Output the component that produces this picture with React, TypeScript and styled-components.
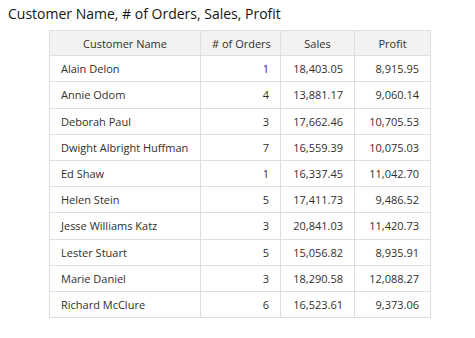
import * as React from 'react';
import styled, { createGlobalStyle } from 'styled-components';

const GlobalStyle = createGlobalStyle`
    body {
        margin: 0;
        background: #fff;
        font-family: "Open Sans", "Noto Sans", sans-serif;
        color: #161513;
    }
`;

const Page = styled.div`
    padding: 5px 8px;
`;

const Title = styled.h1`
    font-size: 14px;
    font-weight: 400;
    margin: 0 0 7px;
    line-height: 18px;
`;

const Table = styled.table`
    border-collapse: collapse;
    table-layout: fixed;
    width: 381px;
    margin-left: 41px;
    font-size: 11px;
    color: #312f2c;
    th, td {
        border: 1px solid #dfdedc;
        height: 25.2px;
        padding: 0 11px;
        white-space: nowrap;
    }
`;

const Head = styled.th<{ $w: number }>`
    box-sizing: border-box;
    width: ${p => p.$w}px;
    background: #f3f2f1;
    font-weight: 400;
    text-align: center;
`;

const Cell = styled.td<{ $num?: boolean }>`
    text-align: ${p => (p.$num ? 'right' : 'left')};
`;

const rows = [
    ['Alain Delon', '1', '18,403.05', '8,915.95'],
    ['Annie Odom', '4', '13,881.17', '9,060.14'],
    ['Deborah Paul', '3', '17,662.46', '10,705.53'],
    ['Dwight Albright Huffman', '7', '16,559.39', '10,075.03'],
    ['Ed Shaw', '1', '16,337.45', '11,042.70'],
    ['Helen Stein', '5', '17,411.73', '9,486.52'],
    ['Jesse Williams Katz', '3', '20,841.03', '11,420.73'],
    ['Lester Stuart', '5', '15,056.82', '8,935.91'],
    ['Marie Daniel', '3', '18,290.58', '12,088.27'],
    ['Richard McClure', '6', '16,523.61', '9,373.06'],
];

export default function App() {
    return (
        <Page>
            <GlobalStyle />
            <Title>Customer Name, # of Orders, Sales, Profit</Title>
            <Table>
                <thead>
                    <tr>
                        <Head $w={151}>Customer Name</Head>
                        <Head $w={80}># of Orders</Head>
                        <Head $w={74}>Sales</Head>
                        <Head $w={76}>Profit</Head>
                    </tr>
                </thead>
                <tbody>
                    {rows.map(r => (
                        <tr key={r[0]}>
                            <Cell>{r[0]}</Cell>
                            <Cell $num>{r[1]}</Cell>
                            <Cell $num>{r[2]}</Cell>
                            <Cell $num>{r[3]}</Cell>
                        </tr>
                    ))}
                </tbody>
            </Table>
        </Page>
    );
}
